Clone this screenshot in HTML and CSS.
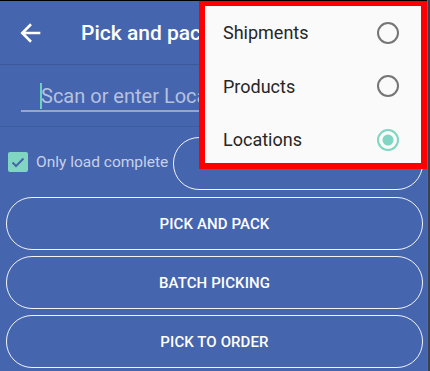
FILE: index.html
```html
<!DOCTYPE html>
<html>
<head>
<meta charset="utf-8">
<link rel="stylesheet" href="styles.css">
</head>
<body>
  <div class="device">
    <div class="screen">
      <header class="toolbar">
        <svg class="back" width="24" height="24" viewBox="0 0 24 24">
          <path d="M20 12H5M12 4.5L4.5 12 12 19.5" fill="none" stroke="#fff" stroke-width="2.2"/>
        </svg>
        <h1 class="title">Pick and pack</h1>
      </header>

      <div class="scan">
        <div class="field">
          <span class="caret"></span>
          <span class="placeholder">Scan or enter Loca</span>
        </div>
      </div>

      <div class="options">
        <label class="check">
          <span class="box">
            <svg width="20" height="20" viewBox="0 0 20 20">
              <path d="M4.5 10.5l3.5 3.5 7.5-7.5" fill="none" stroke="#4565ae" stroke-width="2"/>
            </svg>
          </span>
          <span class="check-label">Only load complete</span>
        </label>
        <button class="btn btn-next">NEXT</button>
      </div>

      <div class="actions">
        <button class="btn">PICK AND PACK</button>
        <button class="btn">BATCH PICKING</button>
        <button class="btn">PICK TO ORDER</button>
      </div>

      <div class="menu">
        <div class="menu-item">
          <span>Shipments</span>
          <svg width="24" height="24" viewBox="0 0 24 24"><circle cx="12" cy="12" r="10" fill="none" stroke="#757575" stroke-width="2"/></svg>
        </div>
        <div class="menu-item">
          <span>Products</span>
          <svg width="24" height="24" viewBox="0 0 24 24"><circle cx="12" cy="12" r="10" fill="none" stroke="#757575" stroke-width="2"/></svg>
        </div>
        <div class="menu-item">
          <span>Locations</span>
          <svg width="24" height="24" viewBox="0 0 24 24"><circle cx="12" cy="12" r="10" fill="none" stroke="#80d6c2" stroke-width="2"/><circle cx="12" cy="12" r="5.5" fill="#80d6c2"/></svg>
        </div>
      </div>
    </div>
    <div class="edge"></div>
  </div>
</body>
</html>
```

FILE: styles.css
```css
html, body {
  margin: 0;
  padding: 0;
  background: #000;
  overflow: hidden;
}

.device {
  display: flex;
  width: 430px;
  height: 371px;
  font-family: Roboto, "Noto Sans", sans-serif;
}

.screen {
  position: relative;
  flex: 1;
  display: flex;
  flex-direction: column;
  margin-top: 1px;
  background: #4565ae;
  overflow: hidden;
}

.edge {
  width: 2px;
  background: #3a3f4d;
  border-left: 1px solid #5a6a93;
}

.toolbar {
  display: flex;
  align-items: center;
  height: 63px;
  flex: none;
  border-bottom: 1px solid #3c5899;
}

.back {
  width: 28px;
  height: 28px;
  margin-left: 17px;
}

.title {
  margin: 0 0 0 36px;
  color: #fff;
  font-size: 21px;
  font-weight: 500;
  white-space: nowrap;
}

.scan {
  height: 61px;
  flex: none;
  padding: 0 20px 0 21px;
  border-bottom: 1px solid #3f5c9f;
}

.field {
  display: flex;
  align-items: center;
  height: 29px;
  margin-top: 16px;
  padding-left: 19px;
  border-bottom: 2px solid #99a6cc;
  white-space: nowrap;
  overflow: hidden;
}

.caret {
  width: 2px;
  height: 26px;
  background: #6fd1b9;
}

.placeholder {
  color: #b6c1e2;
  font-size: 20px;
  margin-left: -1px;
}

.options {
  display: flex;
  align-items: center;
  height: 70px;
  flex: none;
  padding: 0 4px 0 8px;
}

.check {
  display: flex;
  align-items: center;
  gap: 8px;
}

.box {
  display: flex;
  width: 20px;
  height: 20px;
  border-radius: 2px;
  background: #80d6c0;
}

.check-label {
  color: #c9d1ea;
  font-size: 15.5px;
}

.btn {
  height: 53px;
  border: 1px solid #f2f4fa;
  border-radius: 26px;
  background: transparent;
  color: #fff;
  font-family: Roboto, sans-serif;
  font-size: 15px;
  font-weight: 500;
  letter-spacing: 0.1px;
}

.btn-next {
  flex: 1;
  margin-left: 5px;
  margin-top: 3px;
}

.actions {
  display: flex;
  flex-direction: column;
  gap: 6px;
  padding: 0 4px 0 6px;
}

.menu {
  position: absolute;
  top: -1px;
  left: 199px;
  width: 216px;
  height: 157px;
  border: 6px solid #ff0000;
  background: #fafafa;
  overflow: hidden;
}

.menu-item {
  display: flex;
  align-items: center;
  justify-content: space-between;
  height: 53.5px;
  padding: 0 21px 0 18px;
  color: #262626;
  font-size: 18px;
}
```
